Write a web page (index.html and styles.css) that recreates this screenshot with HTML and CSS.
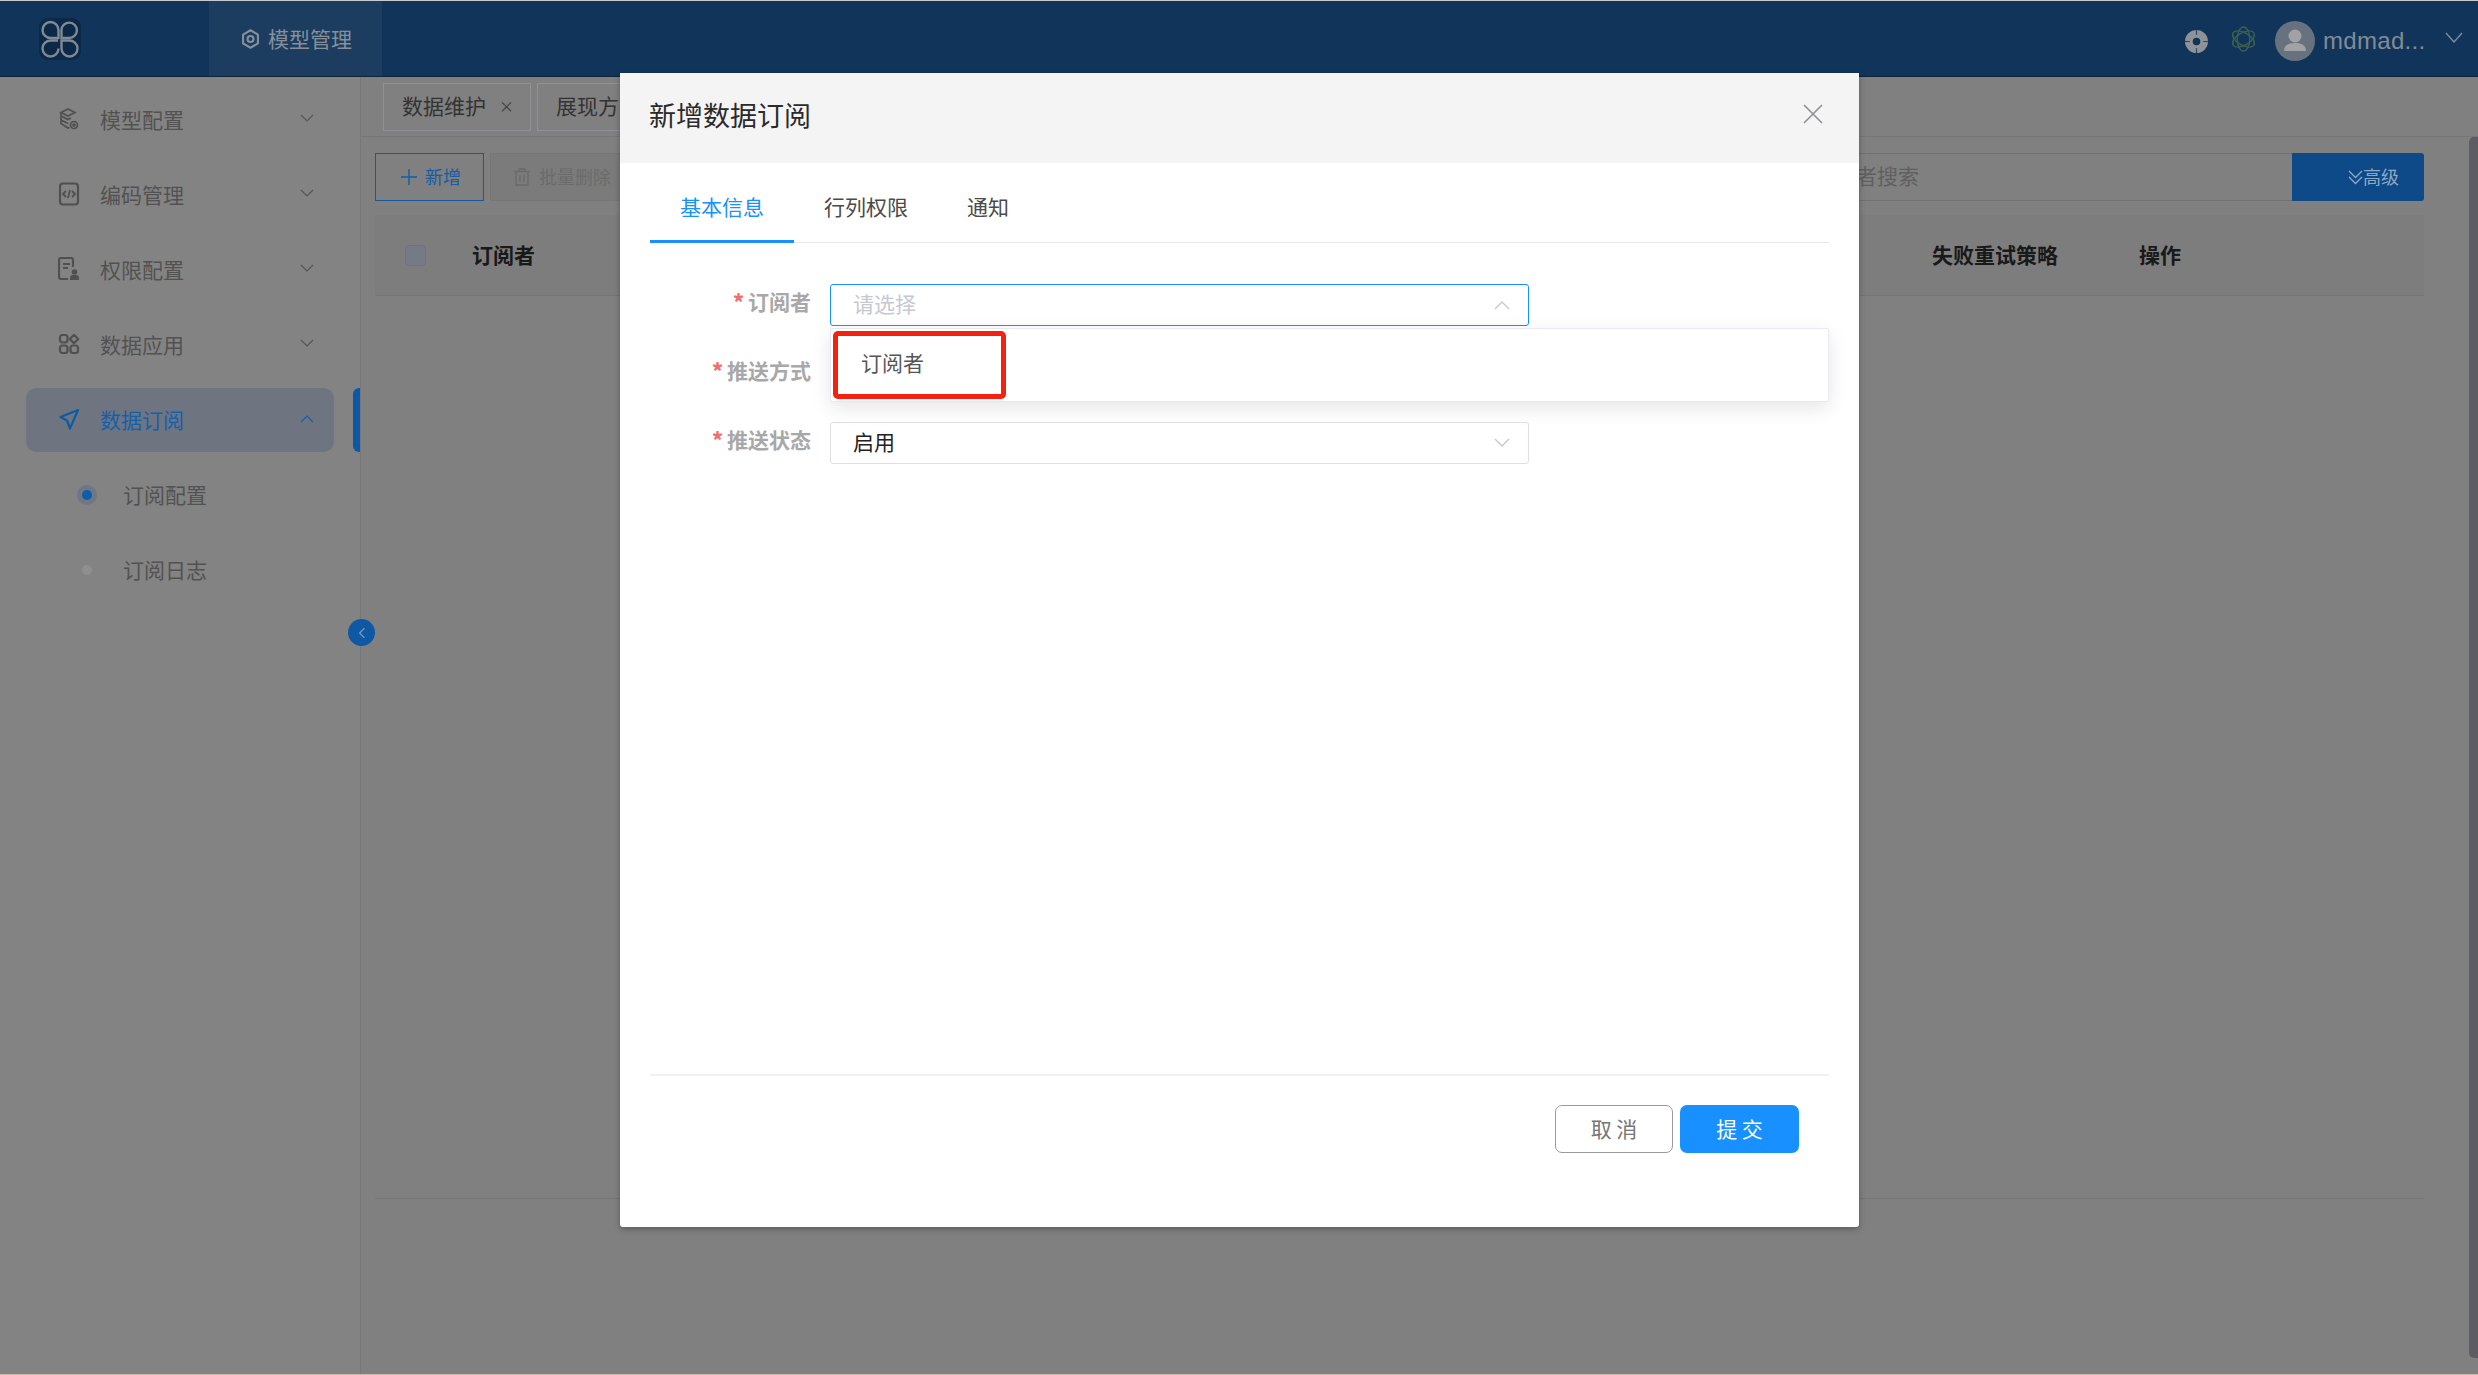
FILE: index.html
```html
<!DOCTYPE html>
<html lang="zh-CN">
<head>
<meta charset="utf-8">
<title>新增数据订阅</title>
<link rel="stylesheet" href="styles.css">
</head>
<body>
<div class="page">
  <header class="topbar">
    <div class="brand">
      <div class="logo">
        <svg viewBox="0 0 42 42" width="42" height="42" fill="none" stroke="#7f8a96" stroke-width="2.4">
          <path d="M19.500 20H11.500a8 8 0 1 1 8-8z"/>
          <path d="M22.500 20H30a7.700 7.700 0 1 0-7.500-8z"/>
          <path d="M19 22.500h-7.500a8 8 0 1 0 8 8"/>
          <path d="M22.500 22.500H30a8 8 0 1 1-7.500 8z"/>
        </svg>
      </div>
    </div>
    <div class="navtab">
      <svg class="gear" viewBox="0 0 24 24" width="21" height="22" fill="none" stroke="#85909b" stroke-width="2.400"><path d="M12 2l8.500 5v10L12 22l-8.500-5V7z" stroke-linejoin="round"/><circle cx="12" cy="12" r="3.400"/></svg>
      <span>模型管理</span>
    </div>
    <div class="tools">
      <svg class="ring" viewBox="0 0 24 24" width="23" height="23"><circle cx="12" cy="12" r="8" fill="none" stroke="#8f9296" stroke-width="8"/><path d="M12 0v5M12 19v5M0 12h5M19 12h5" stroke="#174a70" stroke-width="1.200"/></svg>
      <svg class="knot" viewBox="0 0 28 28" width="27" height="28" fill="none" stroke="#3d5f52" stroke-width="1.500">
        <ellipse cx="14" cy="14" rx="6.500" ry="12.500"/>
        <ellipse cx="14" cy="14" rx="6.500" ry="12.500" transform="rotate(60 14 14)"/>
        <ellipse cx="14" cy="14" rx="6.500" ry="12.500" transform="rotate(120 14 14)"/>
      </svg>
      <div class="avatar">
        <svg viewBox="0 0 40 40" width="40" height="40" fill="#a0a2a4"><circle cx="20" cy="15" r="6.500"/><path d="M9 30c0-6 5-8 11-8s11 2 11 8z"/></svg>
      </div>
      <span class="uname">mdmad...</span>
      <svg class="uchev" viewBox="0 0 18 12" width="18" height="12" fill="none" stroke="#838c95" stroke-width="1.400"><path d="M1 1l8 9 8-9"/></svg>
    </div>
  </header>

  <div class="workspace">
    <aside class="sidebar">
      <div class="menu-item">
        <svg class="mi" viewBox="0 0 20 22" width="20" height="22" fill="none" stroke="#505050" stroke-width="1.700"><path d="M9 1l7 3.500-7 3.500-7-3.500zM2 8l7 3.500 3-1.500M2 12l7 3.500M2 4.500v11L9 20l1.500-.5"/><circle cx="15" cy="17" r="3.500"/><circle cx="15" cy="17" r="1" fill="#505050"/></svg>
        <span class="mt">模型配置</span><svg class="ch" viewBox="0 0 14 9" width="14" height="9"><path d="M1 1l6 6 6-6" fill="none" stroke="#555" stroke-width="1.200"/></svg>
      </div>
      <div class="menu-item">
        <svg class="mi" viewBox="0 0 20 24" width="20" height="24" fill="none" stroke="#505050" stroke-width="2.200"><rect x="1" y="1.500" width="18" height="21" rx="3"/><path d="M7 9l-3 3 3 3M13 9l3 3-3 3M11 8l-2 8" stroke-width="1.800"/></svg>
        <span class="mt">编码管理</span><svg class="ch" viewBox="0 0 14 9" width="14" height="9"><path d="M1 1l6 6 6-6" fill="none" stroke="#555" stroke-width="1.200"/></svg>
      </div>
      <div class="menu-item">
        <svg class="mi" viewBox="0 0 22 24" width="22" height="24" fill="none" stroke="#505050" stroke-width="2.200"><path d="M10 22H3a2 2 0 0 1-2-2V3a2 2 0 0 1 2-2h10a2 2 0 0 1 2 2v7"/><path d="M5 7h7M5 11h5" stroke-width="2"/><circle cx="16.500" cy="15" r="2.800" fill="#505050" stroke="none"/><path d="M12 23v-2a3 3 0 0 1 3-3h3a3 3 0 0 1 3 3v2z" fill="#505050" stroke="none"/></svg>
        <span class="mt">权限配置</span><svg class="ch" viewBox="0 0 14 9" width="14" height="9"><path d="M1 1l6 6 6-6" fill="none" stroke="#555" stroke-width="1.200"/></svg>
      </div>
      <div class="menu-item">
        <svg class="mi" viewBox="0 0 20 20" width="20" height="20" fill="none" stroke="#505050" stroke-width="2.200"><rect x="1" y="1" width="7.500" height="7.500" rx="2.500"/><path d="M15 .8l4.200 4.200-4.200 4.200-4.200-4.200z" stroke-linejoin="round"/><rect x="1" y="11.500" width="7.500" height="7.500" rx="2.500"/><rect x="11.500" y="11.500" width="7.500" height="7.500" rx="2.500"/></svg>
        <span class="mt">数据应用</span><svg class="ch" viewBox="0 0 14 9" width="14" height="9"><path d="M1 1l6 6 6-6" fill="none" stroke="#555" stroke-width="1.200"/></svg>
      </div>
      <div class="menu-item active">
        <svg class="mi" viewBox="0 0 20 22" width="20" height="22" fill="none" stroke="#0f5aa6" stroke-width="2.200" stroke-linejoin="round"><path d="M19 2L1.500 9l6.500 3.500 3 8z"/></svg>
        <span class="mt">数据订阅</span><svg class="ch" viewBox="0 0 14 9" width="14" height="9"><path d="M1 8l6-6 6 6" fill="none" stroke="#1460ad" stroke-width="1.200"/></svg>
        <i class="activebar"></i>
      </div>
      <div class="menu-item sub"><i class="dot on"></i><span>订阅配置</span></div>
      <div class="menu-item sub"><i class="dot"></i><span>订阅日志</span></div>
      <div class="collapse"><svg viewBox="0 0 10 16" width="8" height="14" fill="none" stroke="#7fa3c8" stroke-width="1.400"><path d="M8 2L2 8l6 6"/></svg></div>
    </aside>

    <main class="content">
      <div class="tags">
        <div class="tag"><span>数据维护</span><span class="tagx">×</span></div>
        <div class="tag"><span>展现方式</span><span class="tagx">×</span></div>
      </div>
      <div class="toolbar">
        <button class="btn-add"><svg viewBox="0 0 16 16" width="16" height="16" fill="none" stroke="#135ca6" stroke-width="1.400"><path d="M8 0v16M0 8h16"/></svg><span>新增</span></button>
        <button class="btn-del"><svg viewBox="0 0 16 18" width="16" height="18" fill="none" stroke="#6b6b6b" stroke-width="1.400"><path d="M0 3.500h16M5 3.500V1h6v2.500M2 3.500V17h12V3.500M6 7v7M10 7v7"/></svg><span>批量删除</span></button>
        <div class="search"><span>请输入订阅者搜索</span></div>
        <button class="btn-adv"><svg viewBox="0 0 15 16" width="15" height="16" fill="none" stroke="#8ea9c4" stroke-width="1.300"><path d="M1 2l6.500 6.500L14 2M1 8l6.500 6.500L14 8"/></svg><span>高级</span></button>
      </div>
      <div class="thead">
        <div class="cell"><i class="check"></i></div>
        <div class="cell">订阅者</div>
        <div class="cell">失败重试策略</div>
        <div class="cell">操作</div>
      </div>
      <div class="tbody"></div>
      <i class="scrollbar"></i>
    </main>
  </div>

  <section class="modal">
    <div class="modal-head">
      <h2>新增数据订阅</h2>
      <svg viewBox="0 0 20 20" width="20" height="20" fill="none" stroke="#8f9096" stroke-width="1.600"><path d="M1 1l18 18M19 1L1 19"/></svg>
    </div>
    <div class="modal-body">
      <div class="mtabs">
        <div class="mtab on">基本信息</div>
        <div class="mtab">行列权限</div>
        <div class="mtab narrow">通知</div>
      </div>
      <div class="form">
        <div class="row">
          <label><b>*</b>订阅者</label>
          <div class="select focus"><span class="ph">请选择</span><svg viewBox="0 0 16 10" width="16" height="10" fill="none" stroke="#c6c8d0" stroke-width="1.400"><path d="M1 9l7-7 7 7"/></svg></div>
        </div>
        <div class="row">
          <label><b>*</b>推送方式</label>
          <div class="select"></div>
        </div>
        <div class="row">
          <label><b>*</b>推送状态</label>
          <div class="select"><span>启用</span><svg viewBox="0 0 16 10" width="16" height="10" fill="none" stroke="#c6c8d0" stroke-width="1.400"><path d="M1 1l7 7 7-7"/></svg></div>
        </div>
      </div>
    </div>
    <div class="dropdown">
      <div class="option">订阅者</div>
      <i class="redbox"></i>
    </div>
    <div class="modal-foot">
      <button class="b-cancel">取 消</button>
      <button class="b-ok">提 交</button>
    </div>
  </section>
</div>
</body>
</html>
```
FILE: styles.css
```css
* { box-sizing: border-box; }
html, body { margin: 0; padding: 0; }
body { font-family: "Noto Sans CJK SC", "Noto Sans", sans-serif; font-size: 21px; background: #808080; }
i { display: block; }
button { font-family: inherit; margin: 0; cursor: pointer; }

.page { position: relative; width: 2478px; height: 1375px; overflow: hidden; display: flex; flex-direction: column; border-top: 1px solid #c9c9c9; border-bottom: 1px solid #c4bdb5; background: #808080; }

/* top bar */
.topbar { flex: none; height: 76px; background: #11355a; border-bottom: 1px solid #0e2238; display: flex; }
.brand { width: 209px; padding: 17px 0 0 39px; }
.logo { width: 42px; height: 42px; background: #0c2947; border-radius: 9px; }
.logo svg { display: block; }
.navtab { width: 173px; background: #1c3d5f; color: #86909b; display: flex; align-items: center; padding-left: 31px; gap: 7px; line-height: 1; }
.tools { margin-left: auto; display: flex; align-items: center; padding-right: 15px; height: 75px; }
.ring { margin: 6px 0 0 0; }
.knot { margin: 0 0 0 22px; }
.avatar { width: 40px; height: 40px; border-radius: 50%; background: #68727e; margin: 5px 0 0 18px; overflow: hidden; }
.avatar svg { display: block; }
.uname { font-family: "Liberation Sans", sans-serif; font-size: 24px; letter-spacing: .3px; color: #838b93; margin: 5px 0 0 8px; width: 122px; }
.uchev { margin-top: -2px; }

.workspace { flex: 1; display: flex; min-height: 0; }

/* sidebar */
.sidebar { position: relative; width: 361px; flex: none; background: #838383; border-right: 1px solid #777; padding-top: 11px; }
.menu-item { position: relative; width: 308px; height: 64px; margin: 0 0 11px 26px; border-radius: 10px; display: flex; align-items: center; color: #525252; padding: 0 0 2px 32px; line-height: 1; }
.menu-item .mi { width: 22px; flex: none; }
.menu-item .mt { margin-left: 20px; }
.menu-item .ch { position: absolute; left: 274px; top: 26px; }
.menu-item.active { background: #6e7580; color: #1460ad; }
.activebar { position: absolute; left: 327px; top: 0; width: 7px; height: 64px; background: #0c58a8; border-radius: 6px 0 0 6px; }
.menu-item.sub { padding-left: 97px; }
.dot { position: absolute; left: 56px; top: 27px; width: 10px; height: 10px; border-radius: 50%; background: #8f8f8f; }
.dot.on { background: #0f5cab; box-shadow: 0 0 0 5px #6f7784; }
.collapse { position: absolute; left: 348px; top: 542px; width: 27px; height: 27px; border-radius: 50%; background: #0f58a3; display: flex; align-items: center; justify-content: center; z-index: 2; }

/* main */
.content { position: relative; flex: 1; min-width: 0; padding-right: 54px; display: flex; flex-direction: column; background: #808080; }
.tags { flex: none; height: 60px; padding: 6px 0 0 22px; display: flex; gap: 6px; border-bottom: 1px solid #767676; margin-right: -54px; }
.tag { width: 148px; height: 48px; border: 1px solid #90909c; color: #333; display: flex; align-items: center; padding: 0 0 3px 18px; line-height: 1; white-space: nowrap; }
.tagx { font-size: 15px; margin-left: 13px; color: #3c3c3c; }
.toolbar { flex: none; margin: 16px 0 0 14px; display: flex; height: 48px; }
.toolbar button { height: 48px; font-size: 18px; display: flex; align-items: center; line-height: 1; padding: 0; }
.toolbar button span { margin-top: -2px; }
.btn-add { width: 109px; background: transparent; border: 1px solid #17599d; color: #135ca6; padding-left: 25px !important; gap: 8px; }
.btn-del { width: 170px; margin-left: 6px; background: #7b7b7b; border: 1px solid #767676; color: #6b6b6b; padding-left: 23px !important; gap: 9px; }
.search { margin-left: auto; width: 560px; border: 1px solid #707070; border-right: 0; display: flex; align-items: center; color: #5f5f5f; padding: 0 0 3px 18px; font-size: 21px; line-height: 1; }
.btn-adv { width: 132px; background: #0e4a88; border: 0; border-radius: 0 3px 3px 0; color: #8ea9c4; padding-left: 56px !important; }
.thead { flex: none; margin: 14px 0 0 14px; height: 81px; background: #7d7d7d; border-bottom: 1px solid #757575; display: grid; grid-template-columns: 97px 1460px 207px 1fr; align-items: center; font-weight: 700; color: #191919; line-height: 1; padding-bottom: 2px; }
.check { width: 21px; height: 21px; margin: 2px 0 0 30px; background: #767a84; border: 1px solid #70737c; border-radius: 3px; }
.tbody { height: 903px; margin-left: 14px; border-bottom: 1px solid #747474; }
.scrollbar { position: absolute; right: 0; top: 60px; width: 9px; height: 1221px; background: #5c5d62; border-radius: 5px 0 0 5px; }

/* modal */
.modal { position: absolute; left: 620px; top: 72px; width: 1239px; height: 1154px; background: #fff; border-radius: 0 0 3px 3px; box-shadow: 0 2px 6px rgba(0,0,0,.3); display: flex; flex-direction: column; }
.modal-head { flex: none; height: 90px; background: #f4f4f4; display: flex; align-items: center; justify-content: space-between; padding: 0 36px 8px 29px; }
.modal-head h2 { margin: 0; font-size: 27px; font-weight: 400; color: #2a2a2a; line-height: 1; }
.modal-head svg { display: block; margin-top: 0; }
.modal-body { flex: 1; padding: 0 30px; }
.mtabs { height: 80px; display: flex; border-bottom: 1px solid #e6e6ee; }
.mtab { width: 144px; height: 80px; padding: 33px 0 0 30px; color: #4a4a4a; line-height: 21px; }
.mtab.narrow { width: 102px; padding-left: 29px; }
.mtab.on { color: #1890ff; border-bottom: 3px solid #1890ff; }
.form { margin-top: 41px; display: flex; flex-direction: column; gap: 27px; }
.row { display: flex; align-items: center; gap: 19px; height: 42px; }
.row label { width: 161px; text-align: right; font-weight: 700; color: #a8a8a8; line-height: 1; margin-top: -8px; }
.row label b { color: #f56c6c; margin-right: 4px; font-size: 21px; }
.select { width: 699px; height: 42px; border: 1px solid #dcdfe6; border-radius: 3px; display: flex; align-items: center; justify-content: space-between; padding: 0 18px 0 22px; color: #222; line-height: 1; }
.select span { margin-top: -3px; }
.select.focus { border-color: #1890ff; }
.ph { color: #c6c8d0; }
.dropdown { position: absolute; left: 210px; top: 255px; width: 999px; height: 74px; background: #fff; border: 1px solid #e8e8ef; border-radius: 2px; box-shadow: 0 6px 20px rgba(0,0,0,.1); }
.option { padding: 23px 0 0 30px; color: #555; line-height: 21px; }
.redbox { position: absolute; left: 2px; top: 2px; width: 173px; height: 68px; border: 5px solid #f5200f; border-radius: 5px; }
.modal-foot { flex: none; height: 153px; margin: 0 30px; border-top: 2px solid #f0f0f6; padding: 29px 30px 0 0; display: flex; justify-content: flex-end; align-items: flex-start; gap: 7px; }
.modal-foot button { width: 118px; height: 48px; border-radius: 7px; font-size: 21px; line-height: 1; padding: 0 0 2px; }
.b-cancel { background: #fff; border: 1px solid #9a9a9a; color: #757575; }
.b-ok { background: #1890ff; border: 0; color: #fff; width: 119px !important; }
```
